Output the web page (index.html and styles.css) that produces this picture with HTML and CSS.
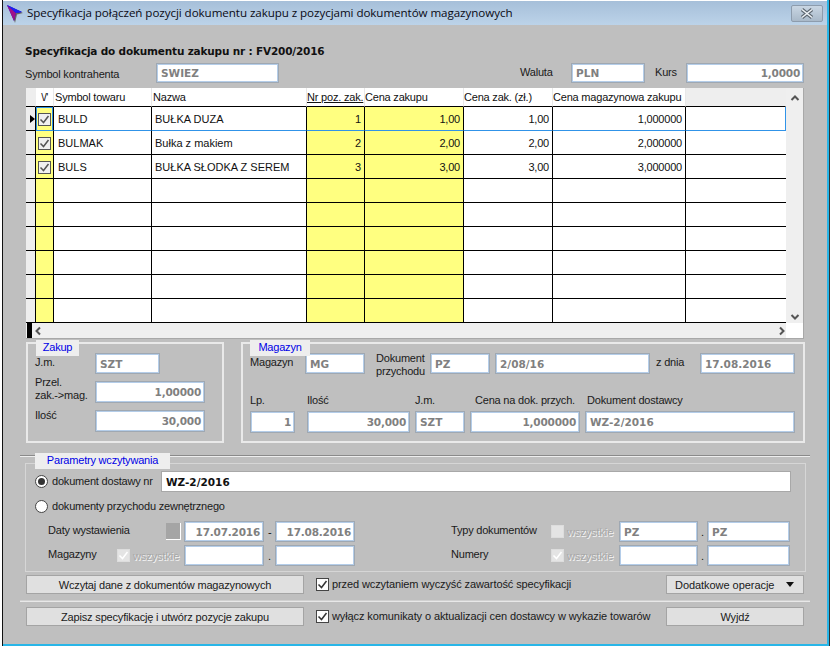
FILE: index.html
```html
<!DOCTYPE html>
<html lang="pl">
<head>
<meta charset="utf-8">
<title>Specyfikacja</title>
<link rel="stylesheet" href="styles.css">
</head>
<body>
<svg class="defs" width="0" height="0" aria-hidden="true">
  <symbol id="tick" viewBox="0 0 11 11"><path d="M1.5 5.5 4.5 8.5 9.5 2" fill="none" stroke="currentColor" stroke-width="1.5"/></symbol>
</svg>
<div class="window">
  <header class="titlebar">
    <svg class="appicon" width="17" height="18" viewBox="0 0 17 18">
      <path d="M1 1 16 8 10 9.5 8 18 5.5 10z" fill="#666"/>
      <path d="M0 0 15 7 9 8 7 16z" fill="#1212c8"/>
      <path d="M0 0 9 8 7 16z" fill="#a0108a"/>
      <path d="M0 0 15 7 9 8z" fill="#2020f0"/>
    </svg>
    <span class="title">Specyfikacja połączeń pozycji dokumentu zakupu z pozycjami dokumentów magazynowych</span>
    <span class="close">
      <svg width="14" height="11" viewBox="0 0 14 11"><path d="M2 1.5 12 9.5M12 1.5 2 9.5" stroke="#5c6670" stroke-width="3.6" fill="none"/><path d="M2 1.5 12 9.5M12 1.5 2 9.5" stroke="#eef2f6" stroke-width="1.6" fill="none"/></svg>
    </span>
  </header>

  <main class="client">
    <h1 class="heading">Specyfikacja do dokumentu zakupu nr : FV200/2016</h1>

    <div class="toprow">
      <span class="lbl lbl-kontr">Symbol kontrahenta</span>
      <span class="inp w-123">SWIEZ</span>
      <span class="lbl lbl-waluta">Waluta</span>
      <span class="inp w-74">PLN</span>
      <span class="lbl lbl-kurs">Kurs</span>
      <span class="inp num w-118">1,0000</span>
    </div>

    <div class="grid">
      <div class="grid-main">
        <table class="tbl">
          <colgroup>
            <col class="c-sel"><col class="c-chk"><col class="c-sym"><col class="c-naz"><col class="c-nr"><col class="c-cena"><col class="c-zak"><col class="c-mag"><col class="c-rest">
          </colgroup>
          <thead>
            <tr>
              <th class="gray"></th><th class="vmark">\/'</th><th>Symbol towaru</th><th>Nazwa</th><th class="under">Nr poz. zak.</th><th>Cena zakupu</th><th>Cena zak. (zł.)</th><th>Cena magazynowa zakupu</th><th class="gray"></th>
            </tr>
          </thead>
          <tbody>
            <tr class="cur">
              <td class="gray ptr"><i class="arrow"></i></td><td class="yel chk cur-chk"><span class="box"><svg width="11" height="11"><use href="#tick"/></svg></span></td><td class="tx">BULD</td><td class="tn">BUŁKA DUZA</td><td class="yel r">1</td><td class="yel r">1,00</td><td class="r">1,00</td><td class="r">1,000000</td><td class="last"></td>
            </tr>
            <tr>
              <td class="gray"></td><td class="yel chk"><span class="box"><svg width="11" height="11"><use href="#tick"/></svg></span></td><td class="tx">BULMAK</td><td class="tn">Bułka z makiem</td><td class="yel r">2</td><td class="yel r">2,00</td><td class="r">2,00</td><td class="r">2,000000</td><td></td>
            </tr>
            <tr>
              <td class="gray"></td><td class="yel chk"><span class="box"><svg width="11" height="11"><use href="#tick"/></svg></span></td><td class="tx">BULS</td><td class="tn">BUŁKA SŁODKA Z SEREM</td><td class="yel r">3</td><td class="yel r">3,00</td><td class="r">3,00</td><td class="r">3,000000</td><td></td>
            </tr>
            <tr><td class="gray"></td><td class="yel"></td><td></td><td></td><td class="yel"></td><td class="yel"></td><td></td><td></td><td></td></tr>
            <tr><td class="gray"></td><td class="yel"></td><td></td><td></td><td class="yel"></td><td class="yel"></td><td></td><td></td><td></td></tr>
            <tr><td class="gray"></td><td class="yel"></td><td></td><td></td><td class="yel"></td><td class="yel"></td><td></td><td></td><td></td></tr>
            <tr><td class="gray"></td><td class="yel"></td><td></td><td></td><td class="yel"></td><td class="yel"></td><td></td><td></td><td></td></tr>
            <tr><td class="gray"></td><td class="yel"></td><td></td><td></td><td class="yel"></td><td class="yel"></td><td></td><td></td><td></td></tr>
            <tr><td class="gray"></td><td class="yel"></td><td></td><td></td><td class="yel"></td><td class="yel"></td><td></td><td></td><td></td></tr>
          </tbody>
        </table>
        <div class="vscroll">
          <svg width="10" height="8" viewBox="0 0 10 8"><path d="M1.5 6 5 2.5 8.5 6" fill="none" stroke="#555" stroke-width="2"/></svg>
          <svg width="10" height="8" viewBox="0 0 10 8"><path d="M1.5 2 5 5.5 8.5 2" fill="none" stroke="#555" stroke-width="2"/></svg>
        </div>
      </div>
      <div class="hscroll">
        <i class="thumb"></i>
        <svg width="8" height="10" viewBox="0 0 8 10"><path d="M6 1.5 2.5 5 6 8.5" fill="none" stroke="#555" stroke-width="2"/></svg>
        <svg class="right-arrow" width="8" height="10" viewBox="0 0 8 10"><path d="M2 1.5 5.5 5 2 8.5" fill="none" stroke="#555" stroke-width="2"/></svg>
        <i class="corner"></i>
      </div>
    </div>

    <div class="groups">
      <section class="group g-zakup">
        <span class="legend lg-zakup">Zakup</span>
        <div class="zakup-grid">
          <span class="lbl up1">J.m.</span>
          <span class="inp w-65 h-21">SZT</span>
          <span class="lbl two up5">Przel.<br>zak.-&gt;mag.</span>
          <span class="inp num w-110">1,00000</span>
          <span class="lbl up3">Ilość</span>
          <span class="inp num w-110">30,000</span>
        </div>
      </section>
      <section class="group g-mag">
        <span class="legend lg-mag">Magazyn</span>
        <div class="mag-row">
          <span class="lbl m-l1">Magazyn</span>
          <span class="inp w-60 h-21">MG</span>
          <span class="lbl two m-l2">Dokument<br>przychodu</span>
          <span class="inp w-60 h-21">PZ</span>
          <span class="inp w-155 h-21 ml-5">2/08/16</span>
          <span class="lbl m-l3">z dnia</span>
          <span class="inp w-95 h-21">17.08.2016</span>
        </div>
        <div class="mag-row2">
          <div class="col"><span class="lbl cap">Lp.</span><span class="inp num w-45">1</span></div>
          <div class="col ml-12"><span class="lbl cap">Ilość</span><span class="inp num w-103">30,000</span></div>
          <div class="col ml-5"><span class="lbl cap">J.m.</span><span class="inp w-50">SZT</span></div>
          <div class="col ml-5"><span class="lbl cap pl-5">Cena na dok. przych.</span><span class="inp num w-110">1,000000</span></div>
          <div class="col ml-5"><span class="lbl cap pl-2">Dokument dostawcy</span><span class="inp w-210">WZ-2/2016</span></div>
        </div>
      </section>
    </div>

    <div class="params">
      <span class="legend lg-param">Parametry wczytywania</span>
      <div class="frame">
        <div class="radio-row r1">
          <span class="radio on"></span>
          <span class="lbl r-lbl">dokument dostawy nr</span>
          <span class="inp plain">WZ-2/2016</span>
        </div>
        <div class="radio-row r2">
          <span class="radio"></span>
          <span class="lbl r-lbl">dokumenty przychodu zewnętrznego</span>
        </div>
        <div class="filters">
          <span class="lbl">Daty wystawienia</span>
          <span class="sq-wrap"><i class="sq"></i></span>
          <span class="inp num">17.07.2016</span>
          <span class="sep">-</span>
          <span class="inp num">17.08.2016</span>
          <span></span>
          <span class="lbl">Typy dokumentów</span>
          <span class="dis"><span class="box off"></span><span class="emb">wszystkie</span></span>
          <span class="inp">PZ</span>
          <span class="sep s2">.</span>
          <span class="inp">PZ</span>

          <span class="lbl">Magazyny</span>
          <span class="dis"><span class="box off"><svg width="11" height="11"><use href="#tick"/></svg></span><span class="emb">wszystkie</span></span>
          <span class="inp"></span>
          <span class="sep">.</span>
          <span class="inp"></span>
          <span></span>
          <span class="lbl">Numery</span>
          <span class="dis"><span class="box off"><svg width="11" height="11"><use href="#tick"/></svg></span><span class="emb">wszystkie</span></span>
          <span class="inp"></span>
          <span class="sep s2">.</span>
          <span class="inp"></span>
        </div>
      </div>
    </div>

    <div class="actions a1">
      <button class="btn b-wide">Wczytaj dane z dokumentów magazynowych</button>
      <span class="box plainbox"><svg width="11" height="11"><use href="#tick"/></svg></span>
      <span class="lbl act-lbl">przed wczytaniem wyczyść zawartość specyfikacji</span>
      <button class="btn b-side drop">Dodatkowe operacje<i class="tri"></i></button>
    </div>
    <div class="divider"></div>
    <div class="actions a2">
      <button class="btn b-wide">Zapisz specyfikację i utwórz pozycje zakupu</button>
      <span class="box plainbox"><svg width="11" height="11"><use href="#tick"/></svg></span>
      <span class="lbl act-lbl">wyłącz komunikaty o aktualizacji cen dostawcy w wykazie towarów</span>
      <button class="btn b-side">Wyjdź</button>
    </div>
  </main>
</div>
</body>
</html>
```
FILE: styles.css
```css
* { box-sizing: border-box; }
html, body { margin: 0; padding: 0; background: #fff; }
body { width: 831px; height: 646px; overflow: hidden; font: 11px/14px "Liberation Sans", Arial, sans-serif; letter-spacing: -0.2px; color: #111; }
.defs { position: absolute; }

.window {
  margin-left: 2px; width: 827px; height: 646px;
  border-left: 1px solid #111; border-right: 2px solid #29b6e8;
  display: flex; flex-direction: column;
  padding-top: 1px; box-shadow: 1px 0 0 #333;
}
.titlebar {
  height: 24px; flex: none; display: flex; align-items: center; position: relative;
  background: linear-gradient(to bottom, #a6bfd9, #bcd3e9);
  padding-left: 4px;
}
.appicon { flex: none; margin-top: 1px; }
.title { margin-left: 3px; font: 11.6px/16px "Open Sans", "Noto Sans", sans-serif; color: #0a0a14; letter-spacing: -0.06px; white-space: nowrap; }
.close {
  position: absolute; left: 788px; top: 4px; width: 32px; height: 17px;
  border: 1px solid #8d9cad; border-radius: 2px;
  background: linear-gradient(to bottom, #c9d6e3, #a9b9c9);
  display: flex; align-items: center; justify-content: center;
}

.client { flex: 1; background: #bfbfbf; padding: 19px 0 0 23px; border-bottom: 2px solid #29b6e8; }
.heading { margin: 0 0 0 -1px; font: bold 10.5px/14px "DejaVu Sans", sans-serif; letter-spacing: -0.18px; color: #111; height: 14px; white-space: nowrap; }

.lbl { white-space: nowrap; line-height: 13px; color: #1a1a1a; }
.inp {
  display: flex; align-items: center; height: 22px; flex: none; padding: 0 3px 0 4px;
  background: #fff; border: 1px solid #9fa8b2; box-shadow: inset 0 0 0 1px #b4cde9;
  font: bold 10.5px/14px "DejaVu Sans", sans-serif; color: #808080; letter-spacing: 0; white-space: nowrap;
}
.num { justify-content: flex-end; letter-spacing: -0.2px; }
.h-21 { height: 21px; }
.w-123 { width: 123px; } .w-74 { width: 74px; } .w-118 { width: 118px; } .w-65 { width: 65px; }
.w-110 { width: 110px; } .w-60 { width: 60px; } .w-155 { width: 155px; } .w-95 { width: 95px; }
.w-45 { width: 45px; } .w-103 { width: 103px; } .w-50 { width: 50px; } .w-210 { width: 210px; }
.ml-5 { margin-left: 5px; } .ml-12 { margin-left: 12px; } .pl-5 { padding-left: 5px; } .pl-2 { padding-left: 2px; }

.toprow { display: flex; align-items: center; height: 20px; margin-top: 5px; }
.toprow .inp { height: 20px; }
.lbl-kontr { margin-top: 3px; width: 131px; margin-left: -1px; flex: none; }
.lbl-waluta { margin-left: 241px; width: 51px; flex: none; margin-top: -2px; }
.lbl-kurs { margin-left: 10px; width: 31px; flex: none; margin-top: -2px; }

/* grid */
.grid { width: 778px; height: 251px; margin-top: 5px; background: #fff; display: flex; flex-direction: column; border-right: 1px solid #a8a8a8; border-bottom: 1px solid #a8a8a8; }
.grid-main { display: flex; height: 235px; flex: none; }
.tbl { table-layout: fixed; border-collapse: separate; border-spacing: 0; width: 760px; flex: none; background: #fff; }
.c-sel { width: 10px; } .c-chk { width: 18px; } .c-sym { width: 98px; } .c-naz { width: 155px; }
.c-nr { width: 58px; } .c-cena { width: 99px; } .c-zak { width: 89px; } .c-mag { width: 133px; } .c-rest { width: 100px; }
.tbl th { height: 19px; padding: 0 0 0 1px; font-weight: normal; font-size: 11px; text-align: left; white-space: nowrap; overflow: hidden; border-right: 1px solid #e8e8e8; border-bottom: 1px solid #000; color: #111; }
.tbl th:nth-child(n+5) { padding-left: 0; }
.tbl th.gray { background: #eee; border-right-color: #eee; }
.tbl th.vmark { text-align: center; letter-spacing: -0.6px; padding: 0; }
.tbl th.under { text-decoration: underline; }
.tbl td { height: 24px; padding: 0; border-right: 1px solid #000; border-bottom: 1px solid #000; font-size: 11px; letter-spacing: 0; white-space: nowrap; color: #111; }
.tbl tr td:last-child { border-right: 0; }
.tbl td.gray { background: #eee; position: relative; }
.yel { background: #ffff80; }
.tbl td.r { text-align: right; padding-right: 3px; letter-spacing: -0.2px; }
.tbl td.tx { padding-left: 4px; }
.tbl td.tn { padding-left: 3px; }
.chk { text-align: center; }
.tbl tr.cur td { border-bottom-color: #3093e8; }
.tbl tr.cur td.gray { border-bottom-color: #000; }
.tbl tr.cur td.last { border-right: 1px solid #3093e8; }
.tbl td.cur-chk { box-shadow: inset 1px 1px 0 #3093e8, inset -1px 0 0 #3093e8; border-right-color: #000; }
.arrow { position: absolute; left: 4px; top: 8px; width: 0; height: 0; border-left: 5px solid #000; border-top: 4px solid transparent; border-bottom: 4px solid transparent; }

.box { display: inline-flex; align-items: center; justify-content: center; width: 13px; height: 13px; border: 1px solid #555; background: #f0f0f0; color: #555; vertical-align: middle; flex: none; }
.box svg { display: block; }
.plainbox { background: #fdfdfd; border-color: #444; color: #333; }
.box.off { width: 13px; height: 13px; border: 1px solid #ddd; background: #e4e4e4; color: #fff; }

.vscroll { flex: 1; background: #efefef; display: flex; flex-direction: column; justify-content: space-between; align-items: center; padding: 6px 0 2px; }
.hscroll { height: 15px; flex: none; background: #efefef; display: flex; align-items: center; position: relative; }
.thumb { width: 5px; height: 15px; background: #000; margin-left: 1px; flex: none; }
.hscroll svg { margin-left: 2px; flex: none; }
.hscroll svg.right-arrow { margin-left: auto; margin-right: 17px; }
.corner { position: absolute; right: 0; top: 0; width: 17px; height: 15px; background: #fff; }

/* groups */
.groups { display: flex; gap: 17px; margin-top: 3px; }
.group { position: relative; height: 101px; border: 2px solid #e9e9e9; flex: none; }
.g-zakup { width: 198px; padding: 9px 0 0 7px; }
.g-mag { width: 564px; padding: 9px 0 0 7px; }
.legend { position: absolute; background: #eee; color: #0000e6; height: 16px; line-height: 15px; text-align: center; font-size: 11px; white-space: nowrap; }
.lg-zakup { left: 8px; top: -4px; width: 43px; }
.lg-mag { left: 7px; top: -4px; width: 60px; }
.zakup-grid { display: grid; grid-template-columns: 60px 110px; grid-template-rows: 21px 22px 22px; row-gap: 7px; align-items: center; }
.zakup-grid .two { align-self: start; }
.up1 { margin-top: -2px; }
.up5 { margin-top: -5px; }
.up3 { align-self: start; position: relative; top: -1px; }
.mag-row { display: flex; align-items: center; height: 21px; }
.m-l1 { width: 55px; flex: none; margin-top: -2px; }
.m-l2 { margin-left: 11px; width: 54px; flex: none; margin-top: 3px; }
.m-l3 { margin-left: 6px; width: 44px; flex: none; margin-top: -2px; }
.mag-row2 { display: flex; margin-top: 19px; }
.col { display: flex; flex-direction: column; }
.cap { height: 18px; line-height: 13px; padding-top: 1px; }

/* params */
.params { position: relative; width: 790px; margin: 12px 0 0 -6px; border-top: 1px solid #8a8a8a; box-shadow: 0 1px 0 #eee inset; height: 116px; padding: 7px 0 0 5px; }
.lg-param { left: 15px; top: -3px; width: 135px; }
.frame { width: 781px; height: 109px; border: 1px solid #d6d6d6; padding-left: 9px; }
.radio-row { display: flex; align-items: center; }
.r1 { height: 21px; margin-top: 7px; }
.r2 { height: 20px; margin-top: 4px; }
.radio { width: 13px; height: 13px; border-radius: 50%; border: 1px solid #444; background: #fff; flex: none; position: relative; }
.radio.on::after { content: ""; position: absolute; left: 2px; top: 2px; width: 7px; height: 7px; border-radius: 50%; background: #333; }
.r-lbl { margin-left: 4px; width: 109px; flex: none; }
.inp.plain { width: 630px; height: 21px; border: 1px solid #a8a8a8; box-shadow: none; color: #111; font-size: 10.5px; }
.filters { display: grid; margin: 5px 0 0 13px; row-gap: 3px; align-items: center; grid-template-columns: 69px 67px 80px 11px 80px 96px 100px 68px 79px 9px 83px; grid-auto-rows: 21px; }
.filters .inp { width: 100%; height: 21px; }
.filters .lbl { margin-top: -2px; }
.sep { padding-left: 4px; }
.s2 { padding-left: 3px; }
.sq-wrap { display: flex; justify-content: flex-end; padding-right: 3px; }
.sq { width: 15px; height: 17px; background: #a5a5a5; border-right: 1px solid #fff; border-bottom: 1px solid #fff; }
.dis { display: flex; align-items: center; gap: 3px; }
.emb { color: #a8a8a8; text-shadow: 1px 1px 0 #f4f4f4; font-size: 11px; letter-spacing: -0.1px; }

/* actions */
.actions { display: flex; align-items: center; height: 19px; }
.a1 { margin-top: 4px; }
.a2 { margin-top: 5px; }
.btn { height: 19px; flex: none; padding: 0; border: 1px solid #a4a4a4; background: #e0e0e0; font: 11px/14px "Liberation Sans", Arial, sans-serif; letter-spacing: -0.17px; color: #1a1a1a; }
.b-wide { width: 278px; }
.b-side { width: 138px; position: relative; }
.drop { text-align: left; padding-left: 8px; letter-spacing: -0.05px; }
.tri { position: absolute; right: 9px; top: 6px; width: 0; height: 0; border-top: 5px solid #111; border-left: 4px solid transparent; border-right: 4px solid transparent; }
.actions .box { margin-left: 12px; }
.act-lbl { margin-left: 3px; width: 334px; flex: none; letter-spacing: -0.1px; }
.divider { width: 790px; margin: 6px 0 0 -6px; height: 2px; background: #e8e8e8; border-top: 1px solid #d0d0d0; }
```
